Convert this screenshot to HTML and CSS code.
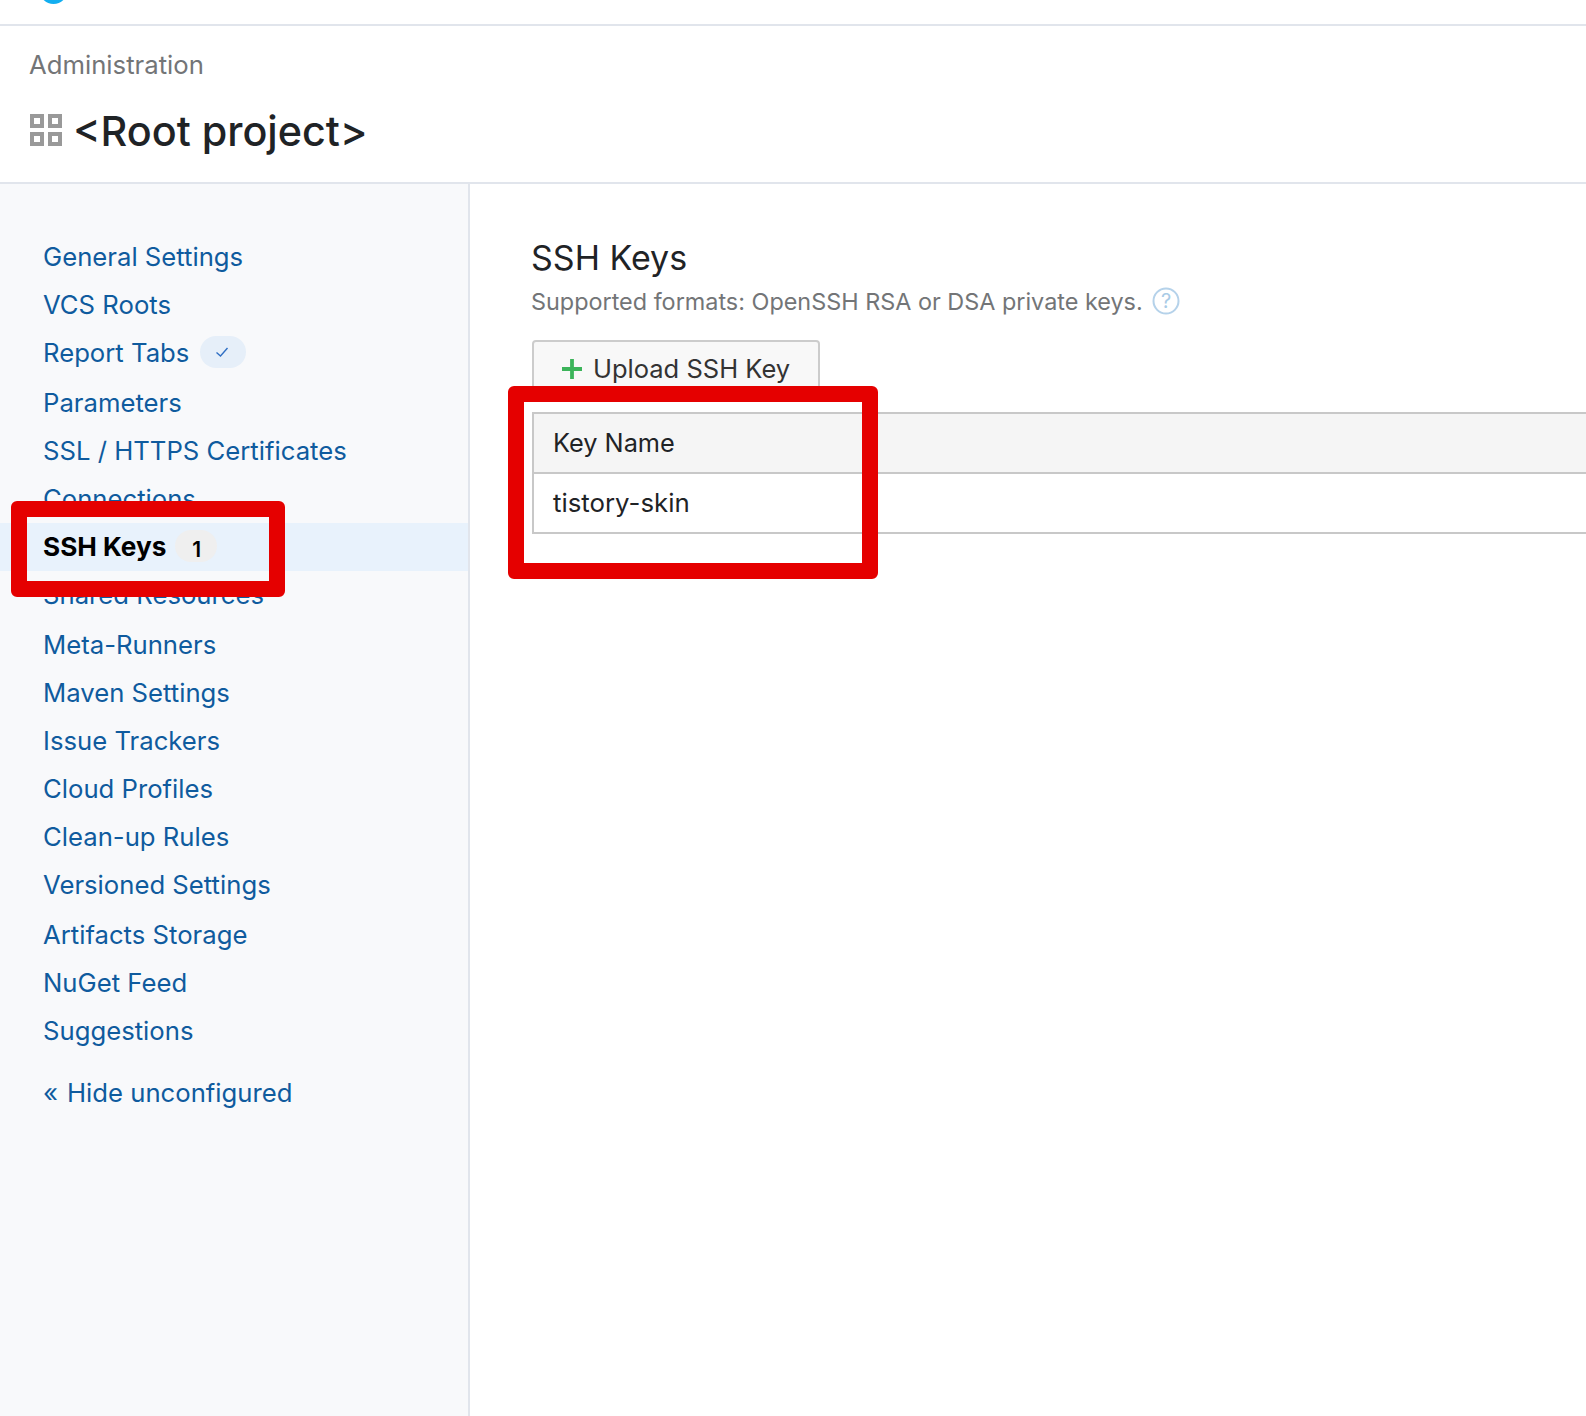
FILE: index.html
```html
<!DOCTYPE html>
<html lang="en">
<head>
<meta charset="utf-8">
<title>SSH Keys</title>
<link rel="stylesheet" href="styles.css">
</head>
<body>
<div class="topbar"><span class="logo"></span></div>
<header class="page-head">
  <div class="crumb">Administration</div>
  <h1 class="project">
    <svg class="project-icon" width="32" height="32" viewBox="0 0 32 32"><path fill="#999" fill-rule="evenodd" d="M0 0h14v14H0zM4 4v6h6V4zM18 0h14v14H18zM22 4v6h6V4zM0 18h14v14H0zM4 22v6h6v-6zM18 18h14v14H18zM22 22v6h6v-6z"/></svg>
    <span>&lt;Root project&gt;</span>
  </h1>
</header>
<div class="main">
  <nav class="sidebar">
    <a class="nav-item">General Settings</a>
    <a class="nav-item">VCS Roots</a>
    <a class="nav-item">Report Tabs <span class="pill pill-blue"><svg class="check" width="14" height="12" viewBox="0 0 14 12"><path d="M1.5 6.5 5.5 10 12.5 2" fill="none" stroke="#2f6fc4" stroke-width="1.4"/></svg></span></a>
    <a class="nav-item gap-2">Parameters</a>
    <a class="nav-item">SSL / HTTPS Certificates</a>
    <a class="nav-item">Connections</a>
    <a class="nav-item active">SSH Keys <span class="pill pill-grey">1</span></a>
    <a class="nav-item after-active">Shared Resources</a>
    <a class="nav-item gap-2">Meta-Runners</a>
    <a class="nav-item">Maven Settings</a>
    <a class="nav-item">Issue Trackers</a>
    <a class="nav-item">Cloud Profiles</a>
    <a class="nav-item">Clean-up Rules</a>
    <a class="nav-item">Versioned Settings</a>
    <a class="nav-item gap-2">Artifacts Storage</a>
    <a class="nav-item">NuGet Feed</a>
    <a class="nav-item">Suggestions</a>
    <a class="nav-item hide-link"><span class="quote">«</span>Hide unconfigured</a>
  </nav>
  <main class="content">
    <h2 class="title">SSH Keys</h2>
    <p class="note">Supported formats: OpenSSH RSA or DSA private keys. <svg class="help" width="28" height="28" viewBox="0 0 28 28"><circle cx="14" cy="14" r="12.5" fill="none" stroke="#b5d2ea" stroke-width="2"/><text x="14" y="20.5" text-anchor="middle" class="help-mark">?</text></svg></p>
    <button class="upload"><svg width="22" height="22" viewBox="0 0 22 22"><path d="M11 1v20M1 11h20" stroke="#3cb45a" stroke-width="3.8"/></svg>Upload SSH Key</button>
    <div class="table">
      <div class="th">Key Name</div>
      <div class="td">tistory-skin</div>
    </div>
  </main>
</div>
<div class="mark mark-nav"></div>
<div class="mark mark-table"></div>
</body>
</html>
```
FILE: styles.css
```css
* { box-sizing: border-box; }
html, body { margin: 0; height: 1416px; overflow: hidden; background: #fff; }
body { font-family: Inter, "Noto Sans", sans-serif; font-size: 25.7px; color: #1f2326; position: relative; }
.topbar { height: 26px; border-bottom: 2px solid #e1e5ec; position: relative; overflow: hidden; }
.logo { position: absolute; left: 39px; top: -26px; width: 29px; height: 30px; border-radius: 50%; background: #12aef0; }
.page-head { height: 158px; border-bottom: 2px solid #e1e5ec; padding: 24px 30px 0; }
.crumb { line-height: 30px; color: #737577; margin-left: -1px; }
.project { margin: 26px 0 0; display: flex; align-items: center; gap: 11px; font-size: 41.3px; line-height: 50px; font-weight: 500; color: #1f2326; }
.project-icon { position: relative; top: -1px; }
.main { display: flex; height: 1232px; }
.sidebar { width: 470px; background: #f8f9fb; border-right: 2px solid #e1e5ec; padding-top: 48px; display: flex; flex-direction: column; }
.nav-item { height: 48px; flex: none; padding-left: 43px; display: flex; align-items: center; color: #0f5b9e; white-space: pre; }
.gap-2 { margin-top: 2px; }
.active { background: #e8f2fc; color: #000; font-weight: 700; font-size: 26.2px; margin-top: 1px; padding-bottom: 2px; }
.after-active { margin-top: -1px; }
.hide-link { margin-top: 14px; }
.quote { margin-right: 9px; }
.pill { display: inline-flex; align-items: center; justify-content: center; height: 32px; border-radius: 16px; margin-left: 3px; font-size: 20px; }
.pill-blue { width: 46px; background: #e6eff9; }
.check { margin-right: 2px; }
.pill-grey { width: 42px; background: #efefef; color: #000; font-weight: 600; margin-left: 2px; padding: 6px 0 0 2px; font-size: 21px; }
.content { flex: 1; padding: 50px 0 0 61px; min-width: 0; }
.title { margin: 0; font-size: 34px; line-height: 48px; font-weight: 400; color: #1f2326; }
.note { margin: 2px 0 0; color: #737577; font-size: 23.4px; line-height: 36px; display: flex; align-items: center; gap: 3px; white-space: pre; }
.help { position: relative; top: -1px; }
.help-mark { font-size: 20px; fill: #a9cbe6; font-family: Inter, sans-serif; }
.upload { margin: 20px 0 0 1px; width: 288px; height: 60px; display: flex; align-items: center; gap: 10px; padding: 0 0 3px 27px; background: #f8f8f8; border: 2px solid #ccc; border-radius: 4px; font: inherit; font-size: 25.5px; color: #333; }
.table { margin: 12px 0 0 1px; border: 2px solid #c8c8c8; border-right: 0; }
.th { height: 60px; background: #f5f5f5; border-bottom: 2px solid #c8c8c8; padding: 0 0 2px 19px; display: flex; align-items: center; font-size: 25.3px; }
.td { height: 58px; padding: 0 0 2px 19px; display: flex; align-items: center; font-size: 25.8px; }
.mark { position: absolute; border: 16px solid #e50000; border-radius: 6px; }
.mark-nav { left: 11px; top: 501px; width: 274px; height: 96px; }
.mark-table { left: 508px; top: 386px; width: 370px; height: 193px; }
```
